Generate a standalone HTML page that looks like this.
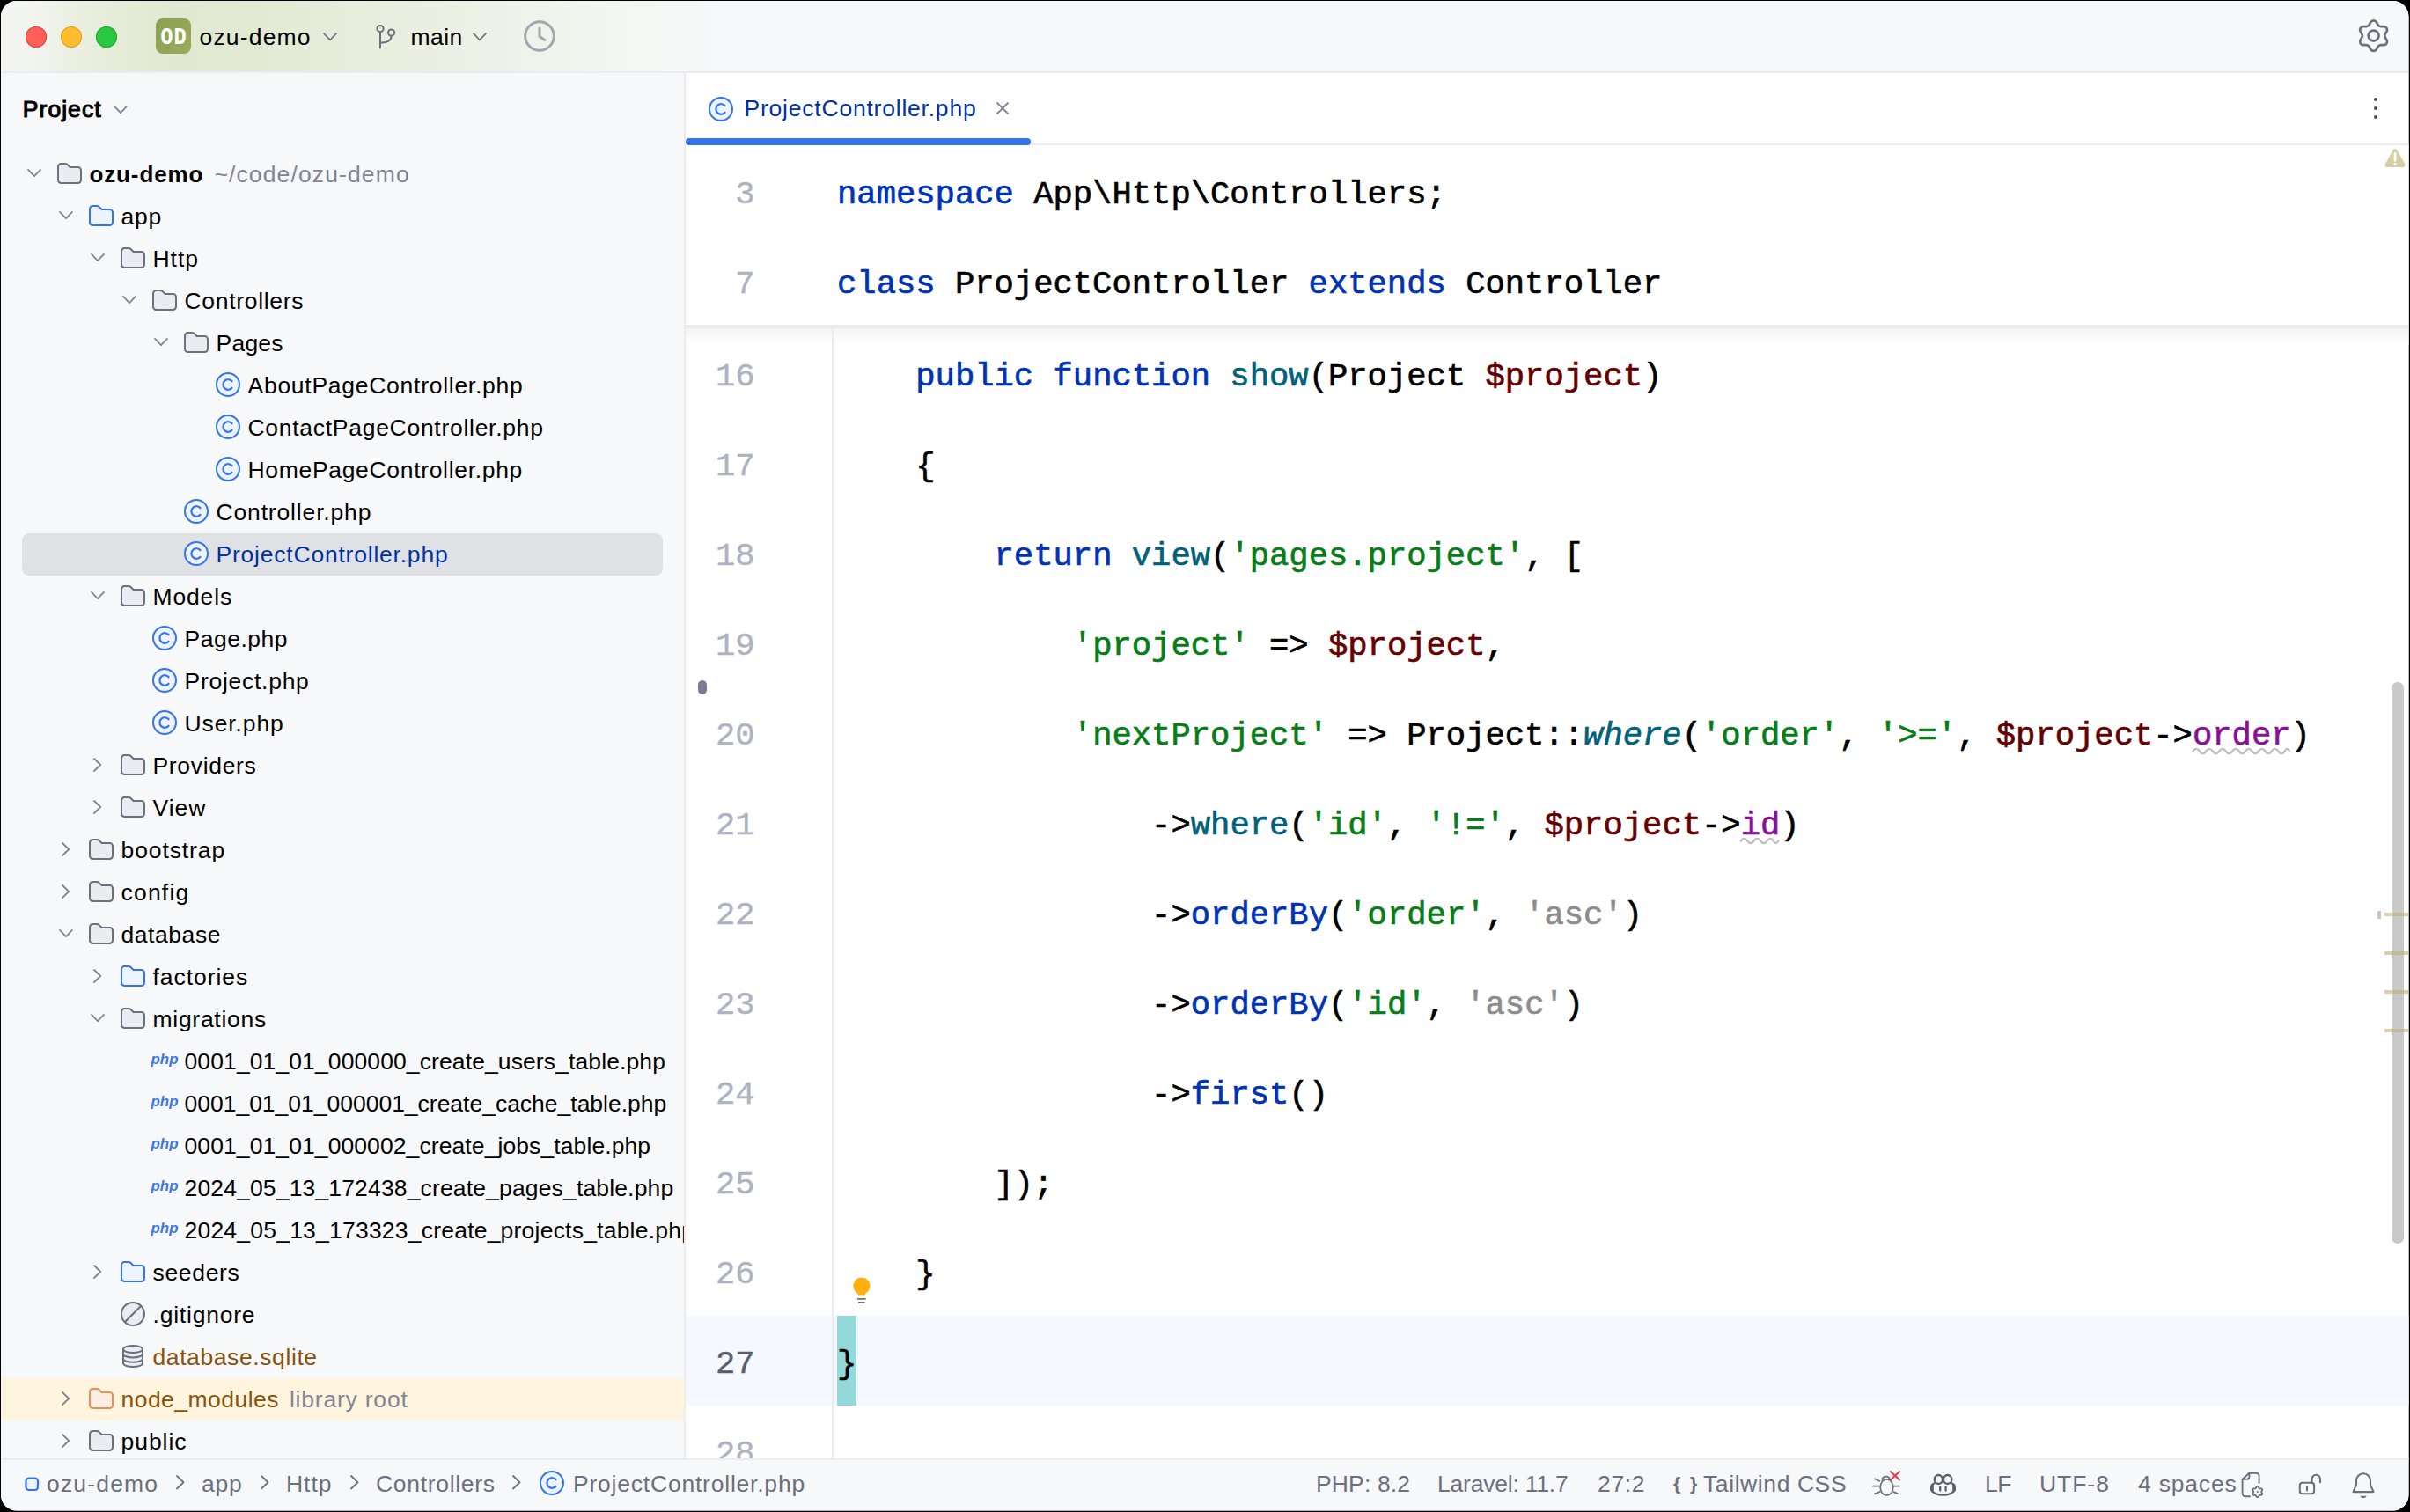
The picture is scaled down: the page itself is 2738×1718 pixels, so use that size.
<!DOCTYPE html>
<html lang="en"><head><meta charset="utf-8"><title>ProjectController.php – ozu-demo</title>
<style>
html,body{margin:0;padding:0;background:#000;}
body{width:2738px;height:1718px;overflow:hidden;position:relative;font-family:"Liberation Sans",sans-serif;}
.win{position:absolute;left:0;top:0;width:2738px;height:1718px;background:#f7f8fa;clip-path:inset(1px 1.5px 1.5px 1px round 18px);overflow:hidden;}
.win *{position:absolute;box-sizing:border-box;}
.t{white-space:pre;font-family:"Liberation Sans",sans-serif;}
.i{overflow:visible;}
.grp{left:0;top:0;width:0;height:0;overflow:visible;}
.titlebar{left:0;top:0;width:2738px;height:83px;border-bottom:2px solid #ebecf0;
 background:linear-gradient(to right,#f5f6f4 0px,#f2f4ee 40px,#e7eddb 110px,#e0e9d0 200px,#e1e9d2 270px,#e7eddc 400px,#eef1e7 560px,#f4f6f2 700px,#f7f8fa 830px);}
.tl{width:24px;height:24px;border-radius:50%;}
.od{left:177px;top:21px;width:40px;height:40px;border-radius:8px;background:linear-gradient(135deg,#8aa34f,#9ca85d);}
.od span{left:0;top:1.3px;width:40px;height:40px;line-height:40px;text-align:center;color:#fff;font-family:"DejaVu Sans Mono","Liberation Mono",monospace;font-weight:700;font-size:24px;letter-spacing:0.8px;text-indent:0.8px;}
.sidebar{left:0;top:83px;width:779px;height:1575px;background:#f7f8fa;border-right:2px solid #ebecf0;}
.sbclip{left:0;top:83px;width:777px;height:1575px;overflow:hidden;}
.sbclip>*{margin-top:-83px;}
.sel{left:25px;width:728px;height:48px;border-radius:8px;background:#dfe1e5;}
.librow{left:0;width:777px;height:48px;background:#fff4de;}
.editor{left:779px;top:83px;width:1959px;height:1575px;background:#fff;}
.edclip{left:779px;top:83px;width:1959px;height:1574px;overflow:hidden;}
.edclip>*{margin-left:-779px;margin-top:-83px;}
.tabline{left:779px;top:163px;width:1959px;height:2px;background:#ebecf0;}
.tabul{left:779px;top:157px;width:392px;height:8px;border-radius:4px;background:#3574f0;}
.dot{width:4px;height:4px;border-radius:50%;background:#4a4c56;}
.guide{left:945px;top:369px;width:2px;height:1289px;background:#ebecf0;}
.curline{left:779px;top:1495px;width:1959px;height:102px;background:#f5f8fe;}
.brace{left:950.5px;top:1495px;width:22.5px;height:102px;background:#93d9d9;}
.ln,.cl{font-family:"Liberation Mono","DejaVu Sans Mono",monospace;font-size:37.2px;line-height:102px;height:102px;white-space:pre;color:#000;-webkit-text-stroke:0.65px;}
.ln{left:779px;width:78.6px;text-align:right;color:#aeb3c2;-webkit-text-stroke:0.4px;}
.ln.cur{color:#5a5d6b;}
.cl span{position:static;}
.k{color:#0033b3}.f{color:#00627a}.s{color:#067d17}.v{color:#660000}.p{color:#871094}.g{color:#8c8c8c}.it{font-style:italic}
.sticky{left:779px;top:165px;width:1959px;height:204px;background:#fff;}
.stsh1{left:779px;top:369px;width:1959px;height:4.3px;background:#ececec;}
.stsh2{left:779px;top:373.3px;width:1959px;height:19px;background:linear-gradient(#f3f3f3,#fafafa 45%,#fff);}
.pill{left:793px;top:773px;width:10px;height:16px;border-radius:5px;background:#7a7c92;}
.sbar{left:2717px;top:775px;width:14px;height:638px;border-radius:7px;background:#c9c9c9;}
.mark{left:2709px;width:28px;height:4px;background:rgba(190,175,120,.6);}
.mark2{left:2701px;top:1035px;width:4px;height:9px;background:#c4c6cc;}
.status{left:0;top:1657px;width:2738px;height:61px;background:#f7f8fa;border-top:2px solid #ebecf0;}
</style></head>
<body>
<div class="win">
<div class="sidebar"></div>
<aside class="sbclip">
<span class="t" style="left:25.80px;top:103.62px;font-size:26.50px;line-height:40px;letter-spacing:1.044px;color:#000;-webkit-text-stroke:1.1px #000;">Project</span>
<svg class="i" style="left:128.00px;top:119.30px" width="18" height="11.2" viewBox="-2 -2 18 11.2"><path d="M0 0L7.0 7.2L14 0" fill="none" stroke="#818594" stroke-width="1.8" stroke-linecap="round" stroke-linejoin="round"/></svg>
<svg class="i" style="left:30.00px;top:191.20px" width="18" height="11.2" viewBox="-2 -2 18 11.2"><path d="M0 0L7.0 7.2L14 0" fill="none" stroke="#818594" stroke-width="1.8" stroke-linecap="round" stroke-linejoin="round"/></svg>
<svg class="i" style="left:63px;top:181px" width="32" height="32" viewBox="0 0 16 16"><path d="M1.5 4.2c0-.94.76-1.7 1.7-1.7h2.35c.45 0 .88.18 1.2.5L8.3 4.5h4.5c.94 0 1.7.76 1.7 1.7v5.6c0 .94-.76 1.7-1.7 1.7H3.2c-.94 0-1.7-.76-1.7-1.7z" fill="#ebecf0" stroke="#6c707e" stroke-width="1"/></svg>
<span class="t" style="left:101.50px;top:177.69px;font-size:26.00px;line-height:40px;letter-spacing:0.865px;color:#000;font-weight:700;">ozu-demo</span>
<span class="t" style="left:243.40px;top:177.52px;font-size:26.50px;line-height:40px;letter-spacing:1.125px;color:#818594;">~/code/ozu-demo</span>
<svg class="i" style="left:66.00px;top:239.20px" width="18" height="11.2" viewBox="-2 -2 18 11.2"><path d="M0 0L7.0 7.2L14 0" fill="none" stroke="#818594" stroke-width="1.8" stroke-linecap="round" stroke-linejoin="round"/></svg>
<svg class="i" style="left:99px;top:229px" width="32" height="32" viewBox="0 0 16 16"><path d="M1.5 4.2c0-.94.76-1.7 1.7-1.7h2.35c.45 0 .88.18 1.2.5L8.3 4.5h4.5c.94 0 1.7.76 1.7 1.7v5.6c0 .94-.76 1.7-1.7 1.7H3.2c-.94 0-1.7-.76-1.7-1.7z" fill="#edf3ff" stroke="#3574f0" stroke-width="1"/></svg>
<span class="t" style="left:137.50px;top:225.52px;font-size:26.50px;line-height:40px;letter-spacing:0.804px;color:#000;">app</span>
<svg class="i" style="left:102.00px;top:287.20px" width="18" height="11.2" viewBox="-2 -2 18 11.2"><path d="M0 0L7.0 7.2L14 0" fill="none" stroke="#818594" stroke-width="1.8" stroke-linecap="round" stroke-linejoin="round"/></svg>
<svg class="i" style="left:135px;top:277px" width="32" height="32" viewBox="0 0 16 16"><path d="M1.5 4.2c0-.94.76-1.7 1.7-1.7h2.35c.45 0 .88.18 1.2.5L8.3 4.5h4.5c.94 0 1.7.76 1.7 1.7v5.6c0 .94-.76 1.7-1.7 1.7H3.2c-.94 0-1.7-.76-1.7-1.7z" fill="#ebecf0" stroke="#6c707e" stroke-width="1"/></svg>
<span class="t" style="left:173.50px;top:273.52px;font-size:26.50px;line-height:40px;letter-spacing:0.966px;color:#000;">Http</span>
<svg class="i" style="left:138.00px;top:335.20px" width="18" height="11.2" viewBox="-2 -2 18 11.2"><path d="M0 0L7.0 7.2L14 0" fill="none" stroke="#818594" stroke-width="1.8" stroke-linecap="round" stroke-linejoin="round"/></svg>
<svg class="i" style="left:171px;top:325px" width="32" height="32" viewBox="0 0 16 16"><path d="M1.5 4.2c0-.94.76-1.7 1.7-1.7h2.35c.45 0 .88.18 1.2.5L8.3 4.5h4.5c.94 0 1.7.76 1.7 1.7v5.6c0 .94-.76 1.7-1.7 1.7H3.2c-.94 0-1.7-.76-1.7-1.7z" fill="#ebecf0" stroke="#6c707e" stroke-width="1"/></svg>
<span class="t" style="left:209.50px;top:321.52px;font-size:26.50px;line-height:40px;letter-spacing:0.682px;color:#000;">Controllers</span>
<svg class="i" style="left:174.00px;top:383.20px" width="18" height="11.2" viewBox="-2 -2 18 11.2"><path d="M0 0L7.0 7.2L14 0" fill="none" stroke="#818594" stroke-width="1.8" stroke-linecap="round" stroke-linejoin="round"/></svg>
<svg class="i" style="left:207px;top:373px" width="32" height="32" viewBox="0 0 16 16"><path d="M1.5 4.2c0-.94.76-1.7 1.7-1.7h2.35c.45 0 .88.18 1.2.5L8.3 4.5h4.5c.94 0 1.7.76 1.7 1.7v5.6c0 .94-.76 1.7-1.7 1.7H3.2c-.94 0-1.7-.76-1.7-1.7z" fill="#ebecf0" stroke="#6c707e" stroke-width="1"/></svg>
<span class="t" style="left:245.50px;top:369.52px;font-size:26.50px;line-height:40px;letter-spacing:0.239px;color:#000;">Pages</span>
<svg class="i" style="left:243px;top:421px" width="32" height="32" viewBox="0 0 16 16"><circle cx="8" cy="8" r="6.5" fill="#edf3ff" stroke="#3574f0" stroke-width="1"/><path d="M10.55 9.55a2.9 2.9 0 1 1 0-3.1" fill="none" stroke="#3574f0" stroke-width="1.1" stroke-linecap="butt"/></svg>
<span class="t" style="left:281.50px;top:417.52px;font-size:26.50px;line-height:40px;letter-spacing:0.732px;color:#000;">AboutPageController.php</span>
<svg class="i" style="left:243px;top:469px" width="32" height="32" viewBox="0 0 16 16"><circle cx="8" cy="8" r="6.5" fill="#edf3ff" stroke="#3574f0" stroke-width="1"/><path d="M10.55 9.55a2.9 2.9 0 1 1 0-3.1" fill="none" stroke="#3574f0" stroke-width="1.1" stroke-linecap="butt"/></svg>
<span class="t" style="left:281.50px;top:465.52px;font-size:26.50px;line-height:40px;letter-spacing:0.717px;color:#000;">ContactPageController.php</span>
<svg class="i" style="left:243px;top:517px" width="32" height="32" viewBox="0 0 16 16"><circle cx="8" cy="8" r="6.5" fill="#edf3ff" stroke="#3574f0" stroke-width="1"/><path d="M10.55 9.55a2.9 2.9 0 1 1 0-3.1" fill="none" stroke="#3574f0" stroke-width="1.1" stroke-linecap="butt"/></svg>
<span class="t" style="left:281.50px;top:513.52px;font-size:26.50px;line-height:40px;letter-spacing:0.677px;color:#000;">HomePageController.php</span>
<svg class="i" style="left:207px;top:565px" width="32" height="32" viewBox="0 0 16 16"><circle cx="8" cy="8" r="6.5" fill="#edf3ff" stroke="#3574f0" stroke-width="1"/><path d="M10.55 9.55a2.9 2.9 0 1 1 0-3.1" fill="none" stroke="#3574f0" stroke-width="1.1" stroke-linecap="butt"/></svg>
<span class="t" style="left:245.50px;top:561.52px;font-size:26.50px;line-height:40px;letter-spacing:0.842px;color:#000;">Controller.php</span>
<div class="sel" style="top:606px"></div>
<svg class="i" style="left:207px;top:613px" width="32" height="32" viewBox="0 0 16 16"><circle cx="8" cy="8" r="6.5" fill="#edf3ff" stroke="#3574f0" stroke-width="1"/><path d="M10.55 9.55a2.9 2.9 0 1 1 0-3.1" fill="none" stroke="#3574f0" stroke-width="1.1" stroke-linecap="butt"/></svg>
<span class="t" style="left:245.50px;top:609.52px;font-size:26.50px;line-height:40px;letter-spacing:0.784px;color:#0032a0;">ProjectController.php</span>
<svg class="i" style="left:102.00px;top:671.20px" width="18" height="11.2" viewBox="-2 -2 18 11.2"><path d="M0 0L7.0 7.2L14 0" fill="none" stroke="#818594" stroke-width="1.8" stroke-linecap="round" stroke-linejoin="round"/></svg>
<svg class="i" style="left:135px;top:661px" width="32" height="32" viewBox="0 0 16 16"><path d="M1.5 4.2c0-.94.76-1.7 1.7-1.7h2.35c.45 0 .88.18 1.2.5L8.3 4.5h4.5c.94 0 1.7.76 1.7 1.7v5.6c0 .94-.76 1.7-1.7 1.7H3.2c-.94 0-1.7-.76-1.7-1.7z" fill="#ebecf0" stroke="#6c707e" stroke-width="1"/></svg>
<span class="t" style="left:173.50px;top:657.52px;font-size:26.50px;line-height:40px;letter-spacing:0.852px;color:#000;">Models</span>
<svg class="i" style="left:171px;top:709px" width="32" height="32" viewBox="0 0 16 16"><circle cx="8" cy="8" r="6.5" fill="#edf3ff" stroke="#3574f0" stroke-width="1"/><path d="M10.55 9.55a2.9 2.9 0 1 1 0-3.1" fill="none" stroke="#3574f0" stroke-width="1.1" stroke-linecap="butt"/></svg>
<span class="t" style="left:209.50px;top:705.52px;font-size:26.50px;line-height:40px;letter-spacing:0.502px;color:#000;">Page.php</span>
<svg class="i" style="left:171px;top:757px" width="32" height="32" viewBox="0 0 16 16"><circle cx="8" cy="8" r="6.5" fill="#edf3ff" stroke="#3574f0" stroke-width="1"/><path d="M10.55 9.55a2.9 2.9 0 1 1 0-3.1" fill="none" stroke="#3574f0" stroke-width="1.1" stroke-linecap="butt"/></svg>
<span class="t" style="left:209.50px;top:753.52px;font-size:26.50px;line-height:40px;letter-spacing:0.729px;color:#000;">Project.php</span>
<svg class="i" style="left:171px;top:805px" width="32" height="32" viewBox="0 0 16 16"><circle cx="8" cy="8" r="6.5" fill="#edf3ff" stroke="#3574f0" stroke-width="1"/><path d="M10.55 9.55a2.9 2.9 0 1 1 0-3.1" fill="none" stroke="#3574f0" stroke-width="1.1" stroke-linecap="butt"/></svg>
<span class="t" style="left:209.50px;top:801.52px;font-size:26.50px;line-height:40px;letter-spacing:0.889px;color:#000;">User.php</span>
<svg class="i" style="left:105.40px;top:859.80px" width="11.2" height="18" viewBox="-2 -2 11.2 18"><path d="M0 0L7.2 7.0L0 14" fill="none" stroke="#818594" stroke-width="1.8" stroke-linecap="round" stroke-linejoin="round"/></svg>
<svg class="i" style="left:135px;top:853px" width="32" height="32" viewBox="0 0 16 16"><path d="M1.5 4.2c0-.94.76-1.7 1.7-1.7h2.35c.45 0 .88.18 1.2.5L8.3 4.5h4.5c.94 0 1.7.76 1.7 1.7v5.6c0 .94-.76 1.7-1.7 1.7H3.2c-.94 0-1.7-.76-1.7-1.7z" fill="#ebecf0" stroke="#6c707e" stroke-width="1"/></svg>
<span class="t" style="left:173.50px;top:849.52px;font-size:26.50px;line-height:40px;letter-spacing:0.670px;color:#000;">Providers</span>
<svg class="i" style="left:105.40px;top:907.80px" width="11.2" height="18" viewBox="-2 -2 11.2 18"><path d="M0 0L7.2 7.0L0 14" fill="none" stroke="#818594" stroke-width="1.8" stroke-linecap="round" stroke-linejoin="round"/></svg>
<svg class="i" style="left:135px;top:901px" width="32" height="32" viewBox="0 0 16 16"><path d="M1.5 4.2c0-.94.76-1.7 1.7-1.7h2.35c.45 0 .88.18 1.2.5L8.3 4.5h4.5c.94 0 1.7.76 1.7 1.7v5.6c0 .94-.76 1.7-1.7 1.7H3.2c-.94 0-1.7-.76-1.7-1.7z" fill="#ebecf0" stroke="#6c707e" stroke-width="1"/></svg>
<span class="t" style="left:173.50px;top:897.52px;font-size:26.50px;line-height:40px;letter-spacing:0.989px;color:#000;">View</span>
<svg class="i" style="left:69.40px;top:955.80px" width="11.2" height="18" viewBox="-2 -2 11.2 18"><path d="M0 0L7.2 7.0L0 14" fill="none" stroke="#818594" stroke-width="1.8" stroke-linecap="round" stroke-linejoin="round"/></svg>
<svg class="i" style="left:99px;top:949px" width="32" height="32" viewBox="0 0 16 16"><path d="M1.5 4.2c0-.94.76-1.7 1.7-1.7h2.35c.45 0 .88.18 1.2.5L8.3 4.5h4.5c.94 0 1.7.76 1.7 1.7v5.6c0 .94-.76 1.7-1.7 1.7H3.2c-.94 0-1.7-.76-1.7-1.7z" fill="#ebecf0" stroke="#6c707e" stroke-width="1"/></svg>
<span class="t" style="left:137.50px;top:945.52px;font-size:26.50px;line-height:40px;letter-spacing:0.903px;color:#000;">bootstrap</span>
<svg class="i" style="left:69.40px;top:1003.80px" width="11.2" height="18" viewBox="-2 -2 11.2 18"><path d="M0 0L7.2 7.0L0 14" fill="none" stroke="#818594" stroke-width="1.8" stroke-linecap="round" stroke-linejoin="round"/></svg>
<svg class="i" style="left:99px;top:997px" width="32" height="32" viewBox="0 0 16 16"><path d="M1.5 4.2c0-.94.76-1.7 1.7-1.7h2.35c.45 0 .88.18 1.2.5L8.3 4.5h4.5c.94 0 1.7.76 1.7 1.7v5.6c0 .94-.76 1.7-1.7 1.7H3.2c-.94 0-1.7-.76-1.7-1.7z" fill="#ebecf0" stroke="#6c707e" stroke-width="1"/></svg>
<span class="t" style="left:137.50px;top:993.52px;font-size:26.50px;line-height:40px;letter-spacing:1.211px;color:#000;">config</span>
<svg class="i" style="left:66.00px;top:1055.20px" width="18" height="11.2" viewBox="-2 -2 18 11.2"><path d="M0 0L7.0 7.2L14 0" fill="none" stroke="#818594" stroke-width="1.8" stroke-linecap="round" stroke-linejoin="round"/></svg>
<svg class="i" style="left:99px;top:1045px" width="32" height="32" viewBox="0 0 16 16"><path d="M1.5 4.2c0-.94.76-1.7 1.7-1.7h2.35c.45 0 .88.18 1.2.5L8.3 4.5h4.5c.94 0 1.7.76 1.7 1.7v5.6c0 .94-.76 1.7-1.7 1.7H3.2c-.94 0-1.7-.76-1.7-1.7z" fill="#ebecf0" stroke="#6c707e" stroke-width="1"/></svg>
<span class="t" style="left:137.50px;top:1041.52px;font-size:26.50px;line-height:40px;letter-spacing:0.555px;color:#000;">database</span>
<svg class="i" style="left:105.40px;top:1099.80px" width="11.2" height="18" viewBox="-2 -2 11.2 18"><path d="M0 0L7.2 7.0L0 14" fill="none" stroke="#818594" stroke-width="1.8" stroke-linecap="round" stroke-linejoin="round"/></svg>
<svg class="i" style="left:135px;top:1093px" width="32" height="32" viewBox="0 0 16 16"><path d="M1.5 4.2c0-.94.76-1.7 1.7-1.7h2.35c.45 0 .88.18 1.2.5L8.3 4.5h4.5c.94 0 1.7.76 1.7 1.7v5.6c0 .94-.76 1.7-1.7 1.7H3.2c-.94 0-1.7-.76-1.7-1.7z" fill="#edf3ff" stroke="#3574f0" stroke-width="1"/></svg>
<span class="t" style="left:173.50px;top:1089.52px;font-size:26.50px;line-height:40px;letter-spacing:0.936px;color:#000;">factories</span>
<svg class="i" style="left:102.00px;top:1151.20px" width="18" height="11.2" viewBox="-2 -2 18 11.2"><path d="M0 0L7.0 7.2L14 0" fill="none" stroke="#818594" stroke-width="1.8" stroke-linecap="round" stroke-linejoin="round"/></svg>
<svg class="i" style="left:135px;top:1141px" width="32" height="32" viewBox="0 0 16 16"><path d="M1.5 4.2c0-.94.76-1.7 1.7-1.7h2.35c.45 0 .88.18 1.2.5L8.3 4.5h4.5c.94 0 1.7.76 1.7 1.7v5.6c0 .94-.76 1.7-1.7 1.7H3.2c-.94 0-1.7-.76-1.7-1.7z" fill="#ebecf0" stroke="#6c707e" stroke-width="1"/></svg>
<span class="t" style="left:173.50px;top:1137.52px;font-size:26.50px;line-height:40px;letter-spacing:0.716px;color:#000;">migrations</span>
<svg class="i" style="left:170px;top:1189px" width="36" height="32" viewBox="0 0 36 32"><text x="1.5" y="20" font-family="Liberation Sans, sans-serif" font-size="17" font-weight="700" font-style="italic" fill="#4079ee" textLength="31" lengthAdjust="spacingAndGlyphs">php</text></svg>
<span class="t" style="left:209.50px;top:1185.52px;font-size:26.50px;line-height:40px;letter-spacing:0.106px;color:#000;">0001_01_01_000000_create_users_table.php</span>
<svg class="i" style="left:170px;top:1237px" width="36" height="32" viewBox="0 0 36 32"><text x="1.5" y="20" font-family="Liberation Sans, sans-serif" font-size="17" font-weight="700" font-style="italic" fill="#4079ee" textLength="31" lengthAdjust="spacingAndGlyphs">php</text></svg>
<span class="t" style="left:209.50px;top:1233.52px;font-size:26.50px;line-height:40px;letter-spacing:-0.011px;color:#000;">0001_01_01_000001_create_cache_table.php</span>
<svg class="i" style="left:170px;top:1285px" width="36" height="32" viewBox="0 0 36 32"><text x="1.5" y="20" font-family="Liberation Sans, sans-serif" font-size="17" font-weight="700" font-style="italic" fill="#4079ee" textLength="31" lengthAdjust="spacingAndGlyphs">php</text></svg>
<span class="t" style="left:209.50px;top:1281.52px;font-size:26.50px;line-height:40px;letter-spacing:0.092px;color:#000;">0001_01_01_000002_create_jobs_table.php</span>
<svg class="i" style="left:170px;top:1333px" width="36" height="32" viewBox="0 0 36 32"><text x="1.5" y="20" font-family="Liberation Sans, sans-serif" font-size="17" font-weight="700" font-style="italic" fill="#4079ee" textLength="31" lengthAdjust="spacingAndGlyphs">php</text></svg>
<span class="t" style="left:209.50px;top:1329.52px;font-size:26.50px;line-height:40px;letter-spacing:0.154px;color:#000;">2024_05_13_172438_create_pages_table.php</span>
<svg class="i" style="left:170px;top:1381px" width="36" height="32" viewBox="0 0 36 32"><text x="1.5" y="20" font-family="Liberation Sans, sans-serif" font-size="17" font-weight="700" font-style="italic" fill="#4079ee" textLength="31" lengthAdjust="spacingAndGlyphs">php</text></svg>
<span class="t" style="left:209.50px;top:1377.52px;font-size:26.50px;line-height:40px;letter-spacing:0.218px;color:#000;">2024_05_13_173323_create_projects_table.php</span>
<svg class="i" style="left:105.40px;top:1435.80px" width="11.2" height="18" viewBox="-2 -2 11.2 18"><path d="M0 0L7.2 7.0L0 14" fill="none" stroke="#818594" stroke-width="1.8" stroke-linecap="round" stroke-linejoin="round"/></svg>
<svg class="i" style="left:135px;top:1429px" width="32" height="32" viewBox="0 0 16 16"><path d="M1.5 4.2c0-.94.76-1.7 1.7-1.7h2.35c.45 0 .88.18 1.2.5L8.3 4.5h4.5c.94 0 1.7.76 1.7 1.7v5.6c0 .94-.76 1.7-1.7 1.7H3.2c-.94 0-1.7-.76-1.7-1.7z" fill="#edf3ff" stroke="#3574f0" stroke-width="1"/></svg>
<span class="t" style="left:173.50px;top:1425.52px;font-size:26.50px;line-height:40px;letter-spacing:0.678px;color:#000;">seeders</span>
<svg class="i" style="left:135px;top:1477px" width="32" height="32" viewBox="0 0 16 16"><circle cx="8" cy="8" r="6.5" fill="#ebecf0" stroke="#6c707e" stroke-width="1"/><path d="M3.6 12.4L12.4 3.6" stroke="#6c707e" stroke-width="1"/></svg>
<span class="t" style="left:173.50px;top:1473.52px;font-size:26.50px;line-height:40px;letter-spacing:0.783px;color:#000;">.gitignore</span>
<svg class="i" style="left:135px;top:1525px" width="32" height="32" viewBox="0 0 16 16"><path d="M2.5 4v8c0 1.1 2.46 2 5.5 2s5.5-.9 5.5-2V4" fill="#ebecf0" stroke="#6c707e"/><ellipse cx="8" cy="4" rx="5.5" ry="2" fill="#ebecf0" stroke="#6c707e"/><path d="M2.5 6.7c0 1.1 2.46 2 5.5 2s5.5-.9 5.5-2M2.5 9.4c0 1.1 2.46 2 5.5 2s5.5-.9 5.5-2" fill="none" stroke="#6c707e"/></svg>
<span class="t" style="left:173.50px;top:1521.52px;font-size:26.50px;line-height:40px;letter-spacing:0.593px;color:#87520a;">database.sqlite</span>
<div class="librow" style="top:1566px"></div>
<svg class="i" style="left:69.40px;top:1579.80px" width="11.2" height="18" viewBox="-2 -2 11.2 18"><path d="M0 0L7.2 7.0L0 14" fill="none" stroke="#818594" stroke-width="1.8" stroke-linecap="round" stroke-linejoin="round"/></svg>
<svg class="i" style="left:99px;top:1573px" width="32" height="32" viewBox="0 0 16 16"><path d="M1.5 4.2c0-.94.76-1.7 1.7-1.7h2.35c.45 0 .88.18 1.2.5L8.3 4.5h4.5c.94 0 1.7.76 1.7 1.7v5.6c0 .94-.76 1.7-1.7 1.7H3.2c-.94 0-1.7-.76-1.7-1.7z" fill="#fdeee2" stroke="#e8905a" stroke-width="1"/></svg>
<span class="t" style="left:137.50px;top:1569.52px;font-size:26.50px;line-height:40px;letter-spacing:0.466px;color:#87520a;">node_modules</span>
<span class="t" style="left:328.94px;top:1569.52px;font-size:26.50px;line-height:40px;letter-spacing:0.787px;color:#818594;">library root</span>
<svg class="i" style="left:69.40px;top:1627.80px" width="11.2" height="18" viewBox="-2 -2 11.2 18"><path d="M0 0L7.2 7.0L0 14" fill="none" stroke="#818594" stroke-width="1.8" stroke-linecap="round" stroke-linejoin="round"/></svg>
<svg class="i" style="left:99px;top:1621px" width="32" height="32" viewBox="0 0 16 16"><path d="M1.5 4.2c0-.94.76-1.7 1.7-1.7h2.35c.45 0 .88.18 1.2.5L8.3 4.5h4.5c.94 0 1.7.76 1.7 1.7v5.6c0 .94-.76 1.7-1.7 1.7H3.2c-.94 0-1.7-.76-1.7-1.7z" fill="#ebecf0" stroke="#6c707e" stroke-width="1"/></svg>
<span class="t" style="left:137.50px;top:1617.52px;font-size:26.50px;line-height:40px;letter-spacing:0.954px;color:#000;">public</span>
</aside>
<div class="editor"></div><main class="edclip">
<svg class="i" style="left:803px;top:107.5px" width="32" height="32" viewBox="0 0 16 16"><circle cx="8" cy="8" r="6.5" fill="#edf3ff" stroke="#3574f0" stroke-width="1"/><path d="M10.55 9.55a2.9 2.9 0 1 1 0-3.1" fill="none" stroke="#3574f0" stroke-width="1.1" stroke-linecap="butt"/></svg>
<span class="t" style="left:845.50px;top:103.02px;font-size:26.50px;line-height:40px;letter-spacing:0.784px;color:#0032a0;">ProjectController.php</span>
<svg class="i" style="left:1129px;top:113px" width="20" height="20" viewBox="0 0 20 20"><path d="M3.5 3.5l13 13M16.500 3.500l-13 13" stroke="#818594" stroke-width="1.800" fill="none"/></svg>
<div class="tabline"></div><div class="tabul"></div>
<div class="dot" style="left:2697px;top:111px"></div>
<div class="dot" style="left:2697px;top:121px"></div>
<div class="dot" style="left:2697px;top:131px"></div>
<div class="stsh1"></div><div class="stsh2"></div>
<div class="curline"></div><div class="guide"></div><div class="brace"></div>
<div class="ln" style="top:377.3px">16</div>
<div class="cl" style="top:377.3px;left:1040.28px"><span class="k">public</span> <span class="k">function</span> <span class="f">show</span>(Project <span class="v">$project</span>)</div>
<div class="ln" style="top:479.3px">17</div>
<div class="cl" style="top:479.3px;left:1040.28px">{</div>
<div class="ln" style="top:581.3px">18</div>
<div class="cl" style="top:581.3px;left:1129.56px"><span class="k">return</span> <span class="f">view</span>(<span class="s">'pages.project'</span>, [</div>
<div class="ln" style="top:683.3px">19</div>
<div class="cl" style="top:683.3px;left:1218.84px"><span class="s">'project'</span> =&gt; <span class="v">$project</span>,</div>
<div class="ln" style="top:785.3px">20</div>
<div class="cl" style="top:785.3px;left:1218.84px"><span class="s">'nextProject'</span> =&gt; Project::<span class="f it">where</span>(<span class="s">'order'</span>, <span class="s">'&gt;='</span>, <span class="v">$project</span>-&gt;<span class="p">order</span>)</div>
<div class="ln" style="top:887.3px">21</div>
<div class="cl" style="top:887.3px;left:1308.12px">-&gt;<span class="f">where</span>(<span class="s">'id'</span>, <span class="s">'!='</span>, <span class="v">$project</span>-&gt;<span class="p">id</span>)</div>
<div class="ln" style="top:989.3px">22</div>
<div class="cl" style="top:989.3px;left:1308.12px">-&gt;<span class="k">orderBy</span>(<span class="s">'order'</span>, <span class="g">'asc'</span>)</div>
<div class="ln" style="top:1091.3px">23</div>
<div class="cl" style="top:1091.3px;left:1308.12px">-&gt;<span class="k">orderBy</span>(<span class="s">'id'</span>, <span class="g">'asc'</span>)</div>
<div class="ln" style="top:1193.3px">24</div>
<div class="cl" style="top:1193.3px;left:1308.12px">-&gt;<span class="k">first</span>()</div>
<div class="ln" style="top:1295.3px">25</div>
<div class="cl" style="top:1295.3px;left:1129.56px">]);</div>
<div class="ln" style="top:1397.3px">26</div>
<div class="cl" style="top:1397.3px;left:1040.28px">}</div>
<div class="ln cur" style="top:1499.3px">27</div>
<div class="cl" style="top:1499.3px;left:951.00px">}</div>
<div class="ln" style="top:1601.3px">28</div>
<div class="cl" style="top:1601.3px;left:951.00px"></div>
<svg class="i" style="left:0;top:0" width="2738" height="1718" viewBox="0 0 2738 1718"><path d="M2491.5 853.5Q2495.2 848.3 2498.9 853.5Q2502.7 858.7 2506.4 853.5Q2510.1 848.3 2513.8 853.5Q2517.6 858.7 2521.3 853.5Q2525.0 848.3 2528.7 853.5Q2532.5 858.7 2536.2 853.5Q2539.9 848.3 2543.6 853.5Q2547.4 858.7 2551.1 853.5Q2554.8 848.3 2558.5 853.5Q2562.3 858.7 2566.0 853.5Q2569.7 848.3 2573.4 853.5Q2577.2 858.7 2580.9 853.5Q2584.6 848.3 2588.3 853.5Q2592.1 858.7 2595.8 853.5Q2598.4 848.3 2601.0 853.5" fill="none" stroke="#bfbfbf" stroke-width="2.4" stroke-linecap="round"/></svg>
<svg class="i" style="left:0;top:0" width="2738" height="1718" viewBox="0 0 2738 1718"><path d="M1977.7 955.5Q1981.4 950.3 1985.2 955.5Q1988.9 960.7 1992.6 955.5Q1996.3 950.3 2000.1 955.5Q2003.8 960.7 2007.5 955.5Q2011.2 950.3 2015.0 955.5Q2017.7 960.7 2020.4 955.5" fill="none" stroke="#bfbfbf" stroke-width="2.4" stroke-linecap="round"/></svg>
<div class="sticky"></div>
<div class="ln" style="top:170.15px">3</div>
<div class="cl" style="top:170.15px;left:951.00px"><span class="k">namespace</span> App\Http\Controllers;</div>
<div class="ln" style="top:272.25px">7</div>
<div class="cl" style="top:272.25px;left:951.00px"><span class="k">class</span> ProjectController <span class="k">extends</span> Controller</div>
</main>
<div class="pill"></div>
<svg class="i" style="left:965px;top:1449px" width="28" height="34" viewBox="965 1449 28 34"><path d="M978.900 1451.600a9.500 9.500 0 0 0-5.300 17.400c.900.700 1.400 1.500 1.400 2.500v1h7.800v-1c0-1 .500-1.800 1.400-2.500a9.500 9.500 0 0 0-5.300-17.400z" fill="#ffaf0f"/><path d="M974.800 1475.800h8.200M975.900 1479.800h6" stroke="#6c707e" stroke-width="1.800" stroke-linecap="round"/></svg>
<div class="sbar"></div>
<div class="mark" style="top:1036.7px"></div>
<div class="mark" style="top:1080.7px"></div>
<div class="mark" style="top:1124.7px"></div>
<div class="mark" style="top:1168.7px"></div>
<div class="mark2"></div>
<svg class="i" style="left:2707px;top:166px" width="28" height="28" viewBox="2707 166 28 28"><path d="M2721 171.800l8.800 15.600h-17.600z" fill="#d6cfa5" stroke="#d6cfa5" stroke-width="5.200" stroke-linejoin="round"/><path d="M2721 174.500v7.800" stroke="#fff" stroke-width="2.800" stroke-linecap="round"/><circle cx="2721" cy="186.600" r="1.700" fill="#fff"/></svg>
<header class="grp">
<div class="titlebar"></div>
<div class="tl" style="left:29px;top:29.5px;background:#fe5f57;box-shadow:inset 0 0 0 1px #e0443e"></div>
<div class="tl" style="left:69px;top:29.5px;background:#febc2e;box-shadow:inset 0 0 0 1px #dea123"></div>
<div class="tl" style="left:108.7px;top:29.5px;background:#28c840;box-shadow:inset 0 0 0 1px #1aab29"></div>
<div class="od"><span>OD</span></div>
<span class="t" style="left:226.50px;top:21.62px;font-size:26.50px;line-height:40px;letter-spacing:1.174px;color:#000;">ozu-demo</span>
<svg class="i" style="left:366.00px;top:35.95px" width="18" height="11.5" viewBox="-2 -2 18 11.5"><path d="M0 0L7.0 7.5L14 0" fill="none" stroke="#6c707e" stroke-width="1.8" stroke-linecap="round" stroke-linejoin="round"/></svg>
<svg class="i" style="left:422px;top:25px" width="32" height="32" viewBox="0 0 32 32"><g fill="none" stroke="#6c707e" stroke-width="2"><circle cx="10" cy="7.5" r="3.6"/><circle cx="22.6" cy="12" r="3.6"/><path d="M10 11.2V29.5" stroke-linecap="round"/><path d="M22.6 15.7c0 5-4.5 7.8-12.6 7.8"/></g></svg>
<span class="t" style="left:466.50px;top:21.62px;font-size:26.50px;line-height:40px;letter-spacing:0.458px;color:#000;">main</span>
<svg class="i" style="left:536.00px;top:35.95px" width="18" height="11.5" viewBox="-2 -2 18 11.5"><path d="M0 0L7.0 7.5L14 0" fill="none" stroke="#6c707e" stroke-width="1.8" stroke-linecap="round" stroke-linejoin="round"/></svg>
<svg class="i" style="left:593px;top:20.5px" width="40" height="40" viewBox="0 0 40 40"><g fill="none" stroke="#a3a6ae" stroke-width="3" stroke-linecap="round" stroke-linejoin="round"><circle cx="20" cy="20" r="16.3"/><path d="M20 11v9.5l6 4"/></g></svg>
<svg class="i" style="left:2674.4px;top:18.4px" width="45.2" height="45.2" viewBox="0 0 40 40"><g fill="none" stroke="#6c707e" stroke-width="2.4" stroke-linejoin="round"><path d="M17.1 3.9c1.3-2.2 4.5-2.2 5.8 0l1.5 2.6c.6 1 1.7 1.7 2.9 1.7h3c2.6 0 4.200 2.800 2.900 5l-1.500 2.600c-.600 1-.600 2.300 0 3.400l1.500 2.600c1.300 2.200-.300 5-2.900 5h-3c-1.200 0-2.300.600-2.900 1.700l-1.500 2.600c-1.300 2.200-4.500 2.200-5.800 0l-1.500-2.600c-.600-1-1.700-1.700-2.900-1.700h-3c-2.600 0-4.200-2.800-2.900-5l1.500-2.600c.6-1 .6-2.300 0-3.400l-1.500-2.600c-1.300-2.200.3-5 2.900-5h3c1.200 0 2.300-.6 2.900-1.700z" transform="translate(0 2.500)"/><circle cx="20" cy="20" r="5.3"/></g></svg>
</header>
<footer class="grp">
<div class="status"></div>
<svg class="i" style="left:26px;top:1675px" width="22" height="22" viewBox="0 0 22 22"><rect x="3.500" y="4.500" width="13.500" height="13.500" rx="3.200" fill="#edf3ff" stroke="#3574f0" stroke-width="2.200"/></svg>
<span class="t" style="left:53.00px;top:1665.52px;font-size:26.50px;line-height:40px;letter-spacing:1.174px;color:#6c707e;">ozu-demo</span>
<svg class="i" style="left:199.25px;top:1675.25px" width="11.5" height="18.5" viewBox="-2 -2 11.5 18.5"><path d="M0 0L7.5 7.25L0 14.5" fill="none" stroke="#6c707e" stroke-width="1.8" stroke-linecap="round" stroke-linejoin="round"/></svg>
<span class="t" style="left:229.00px;top:1665.52px;font-size:26.50px;line-height:40px;letter-spacing:0.804px;color:#6c707e;">app</span>
<svg class="i" style="left:295.25px;top:1675.25px" width="11.5" height="18.5" viewBox="-2 -2 11.5 18.5"><path d="M0 0L7.5 7.25L0 14.5" fill="none" stroke="#6c707e" stroke-width="1.8" stroke-linecap="round" stroke-linejoin="round"/></svg>
<span class="t" style="left:325.00px;top:1665.52px;font-size:26.50px;line-height:40px;letter-spacing:0.966px;color:#6c707e;">Http</span>
<svg class="i" style="left:397.25px;top:1675.25px" width="11.5" height="18.5" viewBox="-2 -2 11.5 18.5"><path d="M0 0L7.5 7.25L0 14.5" fill="none" stroke="#6c707e" stroke-width="1.8" stroke-linecap="round" stroke-linejoin="round"/></svg>
<span class="t" style="left:427.00px;top:1665.52px;font-size:26.50px;line-height:40px;letter-spacing:0.682px;color:#6c707e;">Controllers</span>
<svg class="i" style="left:581.25px;top:1675.25px" width="11.5" height="18.5" viewBox="-2 -2 11.5 18.5"><path d="M0 0L7.5 7.25L0 14.5" fill="none" stroke="#6c707e" stroke-width="1.8" stroke-linecap="round" stroke-linejoin="round"/></svg>
<svg class="i" style="left:611px;top:1668.5px" width="32" height="32" viewBox="0 0 16 16"><circle cx="8" cy="8" r="6.5" fill="#edf3ff" stroke="#3574f0" stroke-width="1"/><path d="M10.55 9.55a2.9 2.9 0 1 1 0-3.1" fill="none" stroke="#3574f0" stroke-width="1.1" stroke-linecap="butt"/></svg>
<span class="t" style="left:651.00px;top:1665.52px;font-size:26.50px;line-height:40px;letter-spacing:0.784px;color:#6c707e;">ProjectController.php</span>
<span class="t" style="left:1495.00px;top:1665.52px;font-size:26.50px;line-height:40px;letter-spacing:0.143px;color:#6c707e;">PHP: 8.2</span>
<span class="t" style="left:1633.00px;top:1665.52px;font-size:26.50px;line-height:40px;letter-spacing:-0.211px;color:#6c707e;">Laravel: 11.7</span>
<span class="t" style="left:1815.00px;top:1665.52px;font-size:26.50px;line-height:40px;letter-spacing:0.639px;color:#6c707e;">27:2</span>
<span class="t" style="left:1901.00px;top:1666.42px;font-size:21.00px;line-height:40px;letter-spacing:2.473px;color:#6c707e;font-weight:700;">{ }</span>
<span class="t" style="left:1935.00px;top:1665.52px;font-size:26.50px;line-height:40px;letter-spacing:0.586px;color:#6c707e;">Tailwind CSS</span>
<span class="t" style="left:2255.00px;top:1665.52px;font-size:26.50px;line-height:40px;letter-spacing:-0.377px;color:#6c707e;">LF</span>
<span class="t" style="left:2317.00px;top:1665.52px;font-size:26.50px;line-height:40px;letter-spacing:0.954px;color:#6c707e;">UTF-8</span>
<span class="t" style="left:2429.00px;top:1665.52px;font-size:26.50px;line-height:40px;letter-spacing:0.809px;color:#6c707e;">4 spaces</span>
<svg class="i" style="left:2100px;top:1660px" width="620" height="56" viewBox="2100 1660 620 56"><g fill="none" stroke="#6c707e" stroke-width="1.7" stroke-linecap="round" stroke-linejoin="round"><ellipse cx="2143.5" cy="1690" rx="7.3" ry="9.2"/><path d="M2138.300 1681.800a4.500 4.500 0 0 1 8.600-1.500"/><path d="M2129.800 1680.300l5.600 2.600M2128 1688.700h7.500M2129.800 1697.400l5.900-2.400M2151.500 1688.700h6.300M2151.300 1695.100l4.600 2"/></g><path d="M2147.400 1671.500l11.200 10.600M2158.600 1671.500l-11.200 10.600" stroke="#db3b4b" stroke-width="2" fill="none"/><g fill="none" stroke="#5a5d6b" stroke-width="2.300" stroke-linecap="round" stroke-linejoin="round"><ellipse cx="2202.300" cy="1681" rx="4.700" ry="5"/><ellipse cx="2212.700" cy="1681" rx="4.700" ry="5"/><path d="M2197.300 1685.500c-2 .800-3.100 2-3.100 4v3.600c2.500 3.700 7.300 5.600 13.300 5.600s10.800-1.900 13.300-5.600v-3.600c0-2-1.100-3.200-3.100-4"/><path d="M2204.200 1689.500v4M2210.600 1689.500v4"/></g><path d="M2194.200 1688.500v5.500l2.600 2v-9.500zM2220.800 1688.500v5.500l-2.600 2v-9.500z" fill="#5a5d6b"/><g fill="none" stroke="#6c707e" stroke-width="1.900" stroke-linecap="round" stroke-linejoin="round"><path d="M2556 1700.200h-5.200a3.200 3.200 0 0 1-3.200-3.200v-16.200l7.800-7.100h8a3.200 3.200 0 0 1 3.200 3.200v8"/><path d="M2555.400 1673.900v4.200a2.700 2.700 0 0 1-2.700 2.700h-4.900"/></g><g transform="translate(2564.700 1695.100) scale(0.4)" fill="none" stroke="#6c707e" stroke-width="4.600" stroke-linejoin="round"><path d="M-2.900-16.100c1.300-2.200 4.500-2.200 5.800 0l1.500 2.600c.6 1 1.700 1.700 2.900 1.700h3c2.600 0 4.200 2.800 2.900 5l-1.500 2.600c-.6 1-.6 2.300 0 3.400l1.500 2.600c1.300 2.200-.3 5-2.900 5h-3c-1.200 0-2.300.6-2.900 1.700l-1.500 2.600c-1.300 2.200-4.500 2.200-5.800 0l-1.500-2.600c-.6-1-1.700-1.700-2.900-1.700h-3c-2.600 0-4.200-2.800-2.900-5l1.500-2.600c.6-1 .6-2.300 0-3.400l-1.500-2.600c-1.300-2.200.3-5 2.900-5h3c1.200 0 2.300-.6 2.900-1.700z" transform="translate(0 2.500)"/><circle cx="0" cy="0" r="2.600" fill="#6c707e" stroke="none"/></g><g fill="none" stroke="#6c707e" stroke-width="2.100" stroke-linecap="round" stroke-linejoin="round"><rect x="2612.800" y="1684.800" width="16.300" height="12.500" rx="3"/><path d="M2621 1688.800v4.600"/><path d="M2626.600 1684.500v-4a4.700 4.700 0 0 1 9.400 0v3.800"/><path d="M2685 1674.300c-4.600 0-8 3.600-8 8v4.600l-3.500 8.200h23l-3.500-8.200v-4.600c0-4.400-3.400-8-8-8z"/></g><path d="M2681.500 1699.700h7c-.4 1.500-1.800 2.400-3.500 2.400s-3.100-.9-3.500-2.400z" fill="#6c707e"/></svg>
</footer>
</div>
</body></html>
